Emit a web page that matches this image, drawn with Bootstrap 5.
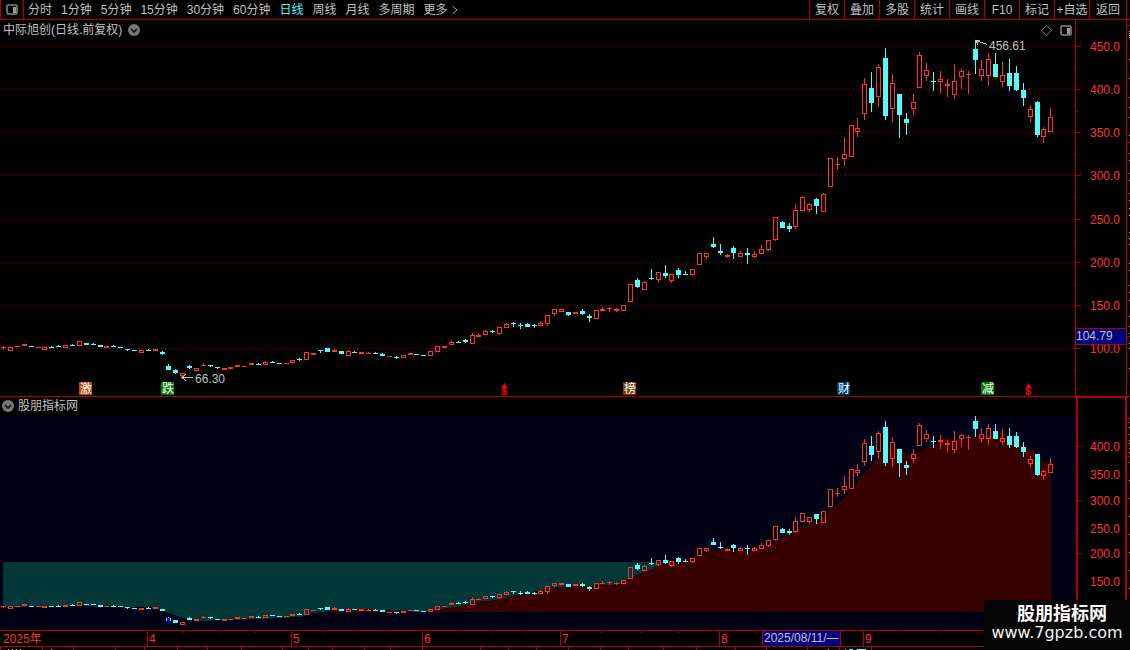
<!DOCTYPE html>
<html lang="zh-CN">
<head>
<meta charset="utf-8">
<meta name="viewport" content="width=device-width, initial-scale=1">
<title>中际旭创 日线</title>
<link href="https://cdn.jsdelivr.net/npm/bootstrap@5.3.0/dist/css/bootstrap.min.css" rel="stylesheet">
<style>
:root { --line:#b00000; --ink:#c0c0c0; --up:#ff3232; --down:#54fcfc; }
body { background:#000; color:var(--ink); font:12px/16px "Liberation Sans","Noto Sans CJK SC",sans-serif; }
.toolbar { height:20px; border-bottom:1px solid var(--line); }
.toolbar .btn, .icon-btn { --bs-btn-padding-x:0; --bs-btn-padding-y:0; --bs-btn-font-size:12px; --bs-btn-line-height:18px; --bs-btn-color:var(--ink); --bs-btn-hover-color:#fff; --bs-btn-border-width:0; --bs-btn-border-radius:0; white-space:nowrap; display:flex; align-items:center; justify-content:center; }
.toolbar .btn.active { color:var(--down); }
.dock-btn { width:24px; border-left:1px solid var(--line) !important; border-right:1px solid var(--line) !important; }
.periods { gap:9px; margin-left:4px; }
.tools .btn { width:35px; border-left:1px solid var(--line); }
.tools .btn:last-child { width:37px; }
.right-edge { width:4px; border-left:1px solid var(--line); }
.title-row { height:20px; padding:0 3px; }
.sub-title { height:19px; padding:0 2px 2px; }
.axis-col { width:55px; }
.price-panel { flex:377 1 0; border-bottom:1px solid var(--line); }
.sub-panel { flex:233 1 0; }
.time-axis { height:17px; border-top:1px solid var(--line); border-bottom:1px solid var(--line); }
.ruler { height:3px; }
.plot { flex:1 1 0; min-height:0; }
.sub-plot { background:#000014; }
svg { display:block; overflow:visible; }
svg text { font:12px "Liberation Sans","Noto Sans CJK SC",sans-serif; }
.brand { right:0; bottom:0; width:146px; height:50px; background:#040404; color:#fff; padding-top:4px; }
.brand strong { font-size:18px; line-height:20px; padding-left:10px; }
.brand span { font:16px/18px "DejaVu Sans",sans-serif; color:#f4f4f4; }
</style>
</head>
<body class="vh-100 overflow-hidden d-flex flex-column position-relative">
<nav class="toolbar d-flex flex-shrink-0" aria-label="周期">
  <button class="btn dock-btn" aria-label="侧栏"><svg width="12" height="11"><rect x="1" y="1" width="10" height="9" rx="1" fill="none" stroke="#888" stroke-width="1.5"/><rect x="7" y="3" width="3" height="6" fill="#999"/></svg></button>
  <div class="periods d-flex">
    <button class="btn">分时</button><button class="btn">1分钟</button><button class="btn">5分钟</button><button class="btn">15分钟</button><button class="btn">30分钟</button><button class="btn">60分钟</button><button class="btn active">日线</button><button class="btn">周线</button><button class="btn">月线</button><button class="btn">多周期</button>
    <button class="btn gap-1">更多<svg width="6" height="10"><path d="M0.5 1L5 5L0.5 9" fill="none" stroke="#aaa"/></svg></button>
  </div>
  <div class="tools d-flex ms-auto">
    <button class="btn">复权</button><button class="btn">叠加</button><button class="btn">多股</button><button class="btn">统计</button><button class="btn">画线</button><button class="btn">F10</button><button class="btn">标记</button><button class="btn">+自选</button><button class="btn">返回</button>
  </div>
  <div class="right-edge"></div>
</nav>

<section class="price-panel d-flex">
  <div class="flex-grow-1 d-flex flex-column">
    <header class="title-row d-flex align-items-center">
      <span>中际旭创(日线.前复权)</span>
      <button class="btn icon-btn ms-1" aria-label="展开"><svg width="14" height="12"><circle cx="8" cy="6" r="6" fill="#777"/><path d="M5 5L8 8L11 5" fill="none" stroke="#111" stroke-width="1.6"/></svg></button>
      <button class="btn icon-btn ms-auto" aria-label="标记点"><svg width="11" height="11"><path d="M5.5 .5L10.5 5.5L5.5 10.5L.5 5.5Z" fill="none" stroke="#777"/></svg></button>
      <button class="btn icon-btn ms-2" aria-label="面板"><svg width="12" height="11"><rect x="1" y="1" width="10" height="9" rx="1" fill="none" stroke="#888" stroke-width="1.5"/><rect x="7" y="3" width="3" height="6" fill="#999"/></svg></button>
    </header>
    <div class="plot"><svg id="price" width="100%" height="100%" shape-rendering="crispEdges"></svg></div>
  </div>
  <div class="axis-col"><svg id="priceAxis" width="100%" height="100%" shape-rendering="crispEdges"></svg></div>
</section>

<section class="sub-panel d-flex">
  <div class="flex-grow-1 d-flex flex-column">
    <header class="sub-title d-flex align-items-center">
      <button class="btn icon-btn" aria-label="展开指标"><svg width="12" height="12"><circle cx="6" cy="6" r="6" fill="#777"/><path d="M3 5L6 8L9 5" fill="none" stroke="#111" stroke-width="1.6"/></svg></button>
      <span class="ms-1">股朋指标网</span>
    </header>
    <div class="plot sub-plot"><svg id="sub" width="100%" height="100%" shape-rendering="crispEdges"></svg></div>
  </div>
  <div class="axis-col"><svg id="subAxis" width="100%" height="100%" shape-rendering="crispEdges"></svg></div>
</section>
<div class="time-axis flex-shrink-0"><svg id="time" width="100%" height="100%" shape-rendering="crispEdges"></svg></div>
<div class="ruler flex-shrink-0"><svg id="ruler" width="100%" height="100%" shape-rendering="crispEdges"></svg></div>
<footer class="brand position-absolute d-flex flex-column align-items-center"><strong>股朋指标网</strong><span>www.7gpzb.com</span></footer>

<script src="https://cdn.jsdelivr.net/npm/bootstrap@5.3.0/dist/js/bootstrap.bundle.min.js"></script>
<script>
// direction, body top, body bottom, high, low
const raw = `r347,347,346,349 r347,350 r346,346 r344,345 c346,346 r347,347 r347,349 c347,347,346,347 c346,346,345,346 r345,347
c345,345,344,345 r341,345 c343,344 c344,344,343,344 c345,346 r346,347 c346,346,345,346 c347,347 c349,349,349,350 c350,350
r350,352 c350,350,349,350 r349,350 c352,353,351,354 c366,369,364,369 c370,372,369,373 r373,375 c366,367,365,368 r368,370 r365,365,363,365
c365,365,365,366 c367,367,367,368 r368,369 r367,368 r365,366 r366,366 r363,364 c364,364,363,364 r362,364,361,364 c362,362,361,362
c363,363 r363,363 r360,362 c359,359,358,360 r352,359 r353,354 c350,350,350,352 c348,351 r350,351,349,351 c351,353
r351,355,350,355 c352,352,351,352 r352,353 r353,353,352,353 c353,353,352,353 c354,355,353,355 r356,356 c357,357,356,358 r355,357 r353,354
c354,354 c355,355 r351,355 r346,351 r346,347 r342,344,340,344 c342,342,341,342 c340,341,339,342 r335,343,333,343 r335,336,334,336
r331,334,330,334 c331,331,330,332 r327,333,327,334 r324,327,323,327 c323,323,322,326 c325,325,323,328 c324,326,323,326 c325,325,324,327 r323,325,321,325 r315,323,315,325
r309,313,309,315 r309,311 c312,314,312,315 r312,313 c311,313,309,314 c316,317,314,321 r310,318 r309,310,307,310 r308,308,307,311 r309,310,308,311
r305,310 r284,301 c280,286,278,287 r282,289,281,289 c278,278,269,279 r272,279,272,281 c273,275,265,277 r274,280,274,282 c270,274,268,277 c274,274,271,274
r269,274,269,275 r253,264 r253,256,253,258 c244,246,237,247 c251,252,244,254 r255,256,254,257 c248,252,246,258 r253,256,251,256 c253,254,248,263 r254,256,251,257
r249,253,245,253 r240,249,240,250 r217,239,217,240 c222,227,221,227 c226,228,223,231 r210,226,204,228 r197,210,196,210 r204,209,203,211 c199,205,198,213 r194,211,193,211
r158,186 r164,164,157,169 r154,158,137,165 r125,156 r128,131,118,136 r84,113,78,119 c88,102,72,111 r67,96,64,106 c58,115,48,119 r83,108,74,121
c94,114,94,137 c119,122,113,134 r102,108,94,114 r55,87,52,87 r70,75,63,80 c81,81,72,90 r79,81,71,92 r84,85,79,96 r81,94,64,98 r71,76,69,88
r74,74,71,93 c49,59,40,73 r69,75,60,80 r59,75,53,85 c64,76,53,76 r75,81,62,86 c73,85,59,90 c73,89,66,90 c90,97,83,105 r109,116,105,121
c102,134,101,136 r129,136,127,142 r117,131,108,131`;
const candles = raw.trim().split(/\s+/).map(s => {
  const n = s.slice(1).split(',').map(Number);
  return { up: s[0] === 'r', top: n[0], bot: n[1], hi: n[2] ?? n[0], lo: n[3] ?? n[1] };
});
// moving average of the lower pane: x, y
const average = [[3,605],[10,607],[40,606],[150,607],[163,611],[172,614],[183,618],[197,621],[225,620],[262,619],[300,617],[312,613],[325,612],[330,610],[360,609],[385,610],[400,611],[424,612],[440,609],[455,607],[475,602],[497,600],[520,594],[560,587],[580,586],[612,585],[625,581],[635,576],[650,570],[662,563],[672,562],[700,556],[720,549],[735,550],[757,550],[775,543],[790,534],[800,527],[815,521],[826,513],[836,506],[843,500],[853,487],[863,474],[872,465],[878,456],[887,449],[893,447],[900,450],[907,455],[913,456],[918,452],[932,446],[943,438],[960,440],[983,436],[997,432],[1005,433],[1013,437],[1023,443],[1030,448],[1037,455],[1043,461],[1051,463]];

const UP = '#ff3232', DOWN = '#54fcfc', LINE = '#b00000', INK = '#c0c0c0';
const $ = id => document.getElementById(id);
const rect = (x, y, w, h, f) => `<rect x="${x}" y="${y}" width="${w}" height="${h}" fill="${f}"/>`;
const text = (x, y, s, f, extra = '') => `<text x="${x}" y="${y}" fill="${f}" ${extra}>${s}</text>`;

function drawCandles(xAt, yAt, blueAt) {
  return candles.map((c, i) => {
    const x = xAt(i), t = yAt(c.top), b = yAt(c.bot), hi = yAt(c.hi), lo = yAt(c.lo), col = c.up ? UP : DOWN, h = b - t + 1;
    let out = '';
    if (hi < t) out += rect(x, hi, 1, t - hi, col);
    if (lo > b) out += rect(x, b + 1, 1, lo - b, col);
    out += c.up && h > 2 ? `<rect x="${x - 1.5}" y="${t + .5}" width="4" height="${h - 1}" fill="none" stroke="${col}"/>` : rect(x - 2, t, 5, h, col);
    if (i === blueAt) out += rect(x - 1, t, 3, h + 1, '#0000ff');
    return out;
  }).join('');
}

function draw() {
  const W = $('price').clientWidth, H = $('price').clientHeight, k = H / 356, kx = W / 1075;
  const xAt = i => Math.floor(3.55 + i * (W - 27.7) / 152);
  const yAt = y => Math.round((y - 40) * k);
  const levels = [[450,46],[400,89],[350,132],[300,175],[250,219],[200,262],[150,305],[100,348]];
  let s = '';
  levels.forEach(([, y]) => s += `<path d="M1 ${yAt(y) + .5}H${W}" stroke="#b00000" stroke-dasharray="1 3"/>`);
  s += drawCandles(xAt, yAt, -1);
  [[12,'激','#c04808'],[24,'跌','#008000'],[91,'榜','#804000'],[122,'财','#003c74'],[143,'减','#008000']].forEach(([i, t, f]) =>
    s += rect(xAt(i) - 7, yAt(382), 13, 13, f) + text(xAt(i) - 6, yAt(393), t, '#fff'));
  [73,149].forEach(i => s += `<path d="M${xAt(i) - 4} ${yAt(387)}h5l-2.5 -4z" fill="red"/>` + text(xAt(i) - 5, yAt(395), '$', 'red', 'style="font-weight:bold;font-size:11px"'));
  s += `<g stroke="${INK}" fill="none"><path d="M${xAt(26)} ${yAt(377) + .5}h11m-7 -3l-4 3l4 3"/><path d="M${xAt(141) + 1} ${yAt(40) + .5}l11 4m-11 -4h4m-4 0l2 4"/></g>`;
  s += text(xAt(26) + 13, yAt(383), '66.30', INK) + text(xAt(141) + 14, yAt(50), '456.61', INK);
  $('price').innerHTML = s;

  const ya = y => Math.round((y - 20) * k);
  s = rect(0, 0, 1, $('priceAxis').clientHeight, LINE) + rect(51, 0, 1, $('priceAxis').clientHeight, LINE);
  levels.forEach(([v, y]) => {
    s += rect(1, ya(y), 5, 1, LINE) + rect(1, ya(y + 22), 2, 1, LINE) + text(15, ya(y + 5), v + '.0', UP);
  });
  s += rect(0, ya(328), 52, 17, LINE) + rect(1, ya(329), 50, 15, '#000080') + text(1, ya(340), '104.79', INK);
  [25,142,336].forEach(y => s += rect(52, ya(y), 3, 1, LINE));
  [31,33,35,37,59,78,97,107,117,135,153,160,173,180,193,200,208,215,232,238,244,263,270,285,292,300,316,326,333,343,348,368].forEach(y => s += rect(54, ya(y), 1, 1, '#ccc'));
  $('priceAxis').innerHTML = s;

  const SH = $('sub').clientHeight, q = SH / 214;
  const ys = y => Math.round((391 + .62 * y - 416) * q);
  const pts = average.map(([x, y]) => [Math.round(x * kx), Math.round((y - 416) * q)]);
  const cap = Math.round(146 * q), floor = Math.round(196 * q);
  const under = pts.filter(p => p[1] >= cap), over = pts.filter(p => p[0] >= 325 * kx);
  s = `<path d="M${under[0][0]} ${cap}L${under.map(p => p.join(' ')).join('L')}V${cap}Z" fill="#003838"/>`;
  s += `<path d="M${over[0][0]} ${floor}L${over.map(p => p.join(' ')).join('L')}V${floor}Z" fill="#380000"/>`;
  $('sub').innerHTML = s + drawCandles(xAt, ys, 24);

  const AH = $('subAxis').clientHeight, yb = y => Math.round((y - 397) * AH / 233);
  s = rect(0, -1, 52, 2, LINE) + rect(1, 0, 2, AH, LINE) + rect(50, 0, 2, AH, LINE);
  [[400,446],[350,474],[300,500],[250,528],[200,553],[150,581]].forEach(([v, y], i) =>
    s += rect(3, yb(y), i % 2 ? 1 : 4, 1, LINE) + text(15, yb(y + 5), v + '.0', UP));
  [418,456].forEach(y => s += rect(52, yb(y), 3, 1, LINE));
  [422,427,434,440,443,448,452,462,480,498,516,534,552,570,588].forEach(y => s += rect(54, yb(y), 1, 1, '#ccc'));
  $('subAxis').innerHTML = s;

  const X = x => Math.round(x * kx);
  s = text(X(3), 12, '2025年', UP);
  [[147,'4'],[291,'5'],[422,'6'],[560,'7'],[719,'8'],[863,'9']].forEach(([x, t]) => s += rect(X(x), 0, 1, 15, LINE) + text(X(x) + 2, 12, t, UP));
  [183,219,255,324,357,389,457,491,526,600,640,679,755,901,939,977].forEach(x => s += rect(X(x), 0, 1, 2, LINE));
  s += rect(X(762), 0, 79, 15, LINE) + rect(X(763), 0, 77, 15, '#000080') + text(X(763) + 1, 11, '2025/08/11/—', INK);
  $('time').innerHTML = s;

  s = '';
  [0,42,73,115,144,177,207,241,282,308,332,364,390,422,480,508,536,568,600,628,663,696,735,766,807,839,871].forEach(x => s += rect(X(x), 0, 1, 3, LINE));
  [8,12,16,20,51,828,845].forEach(x => s += rect(X(x), 2, 1, 1, '#ccc'));
  s += rect(X(849), 2, 4, 1, DOWN) + rect(X(857), 2, 9, 1, DOWN);
  $('ruler').innerHTML = s;
}
draw();
addEventListener('resize', draw);
</script>
</body>
</html>
